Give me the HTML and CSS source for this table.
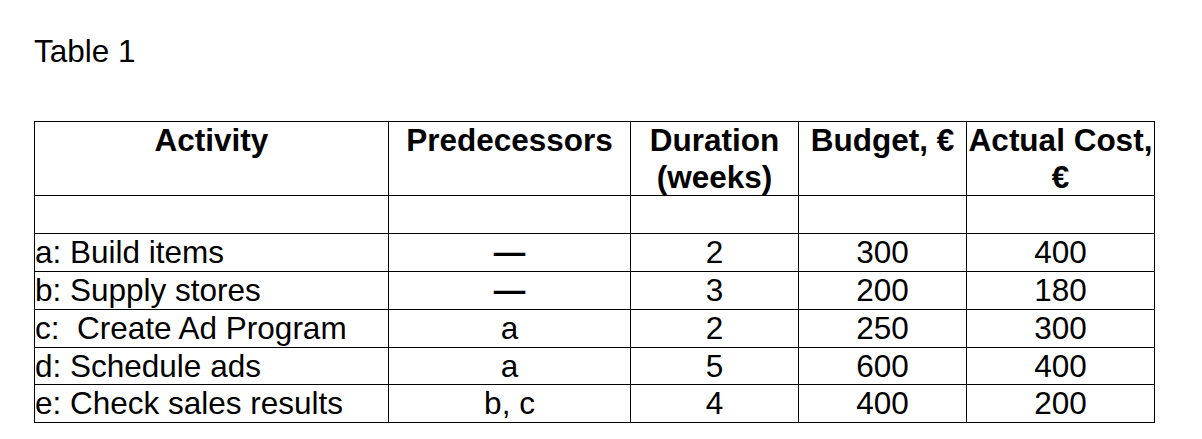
FILE: index.html
```html
<!DOCTYPE html>
<html lang="en">
<head>
<meta charset="utf-8">
<title>Table 1</title>
<link rel="stylesheet" href="styles.css">
</head>
<body>
<main class="page">
  <p class="caption">Table 1</p>
  <table class="data">
    <colgroup>
      <col class="c-activity">
      <col class="c-pred">
      <col class="c-dur">
      <col class="c-budget">
      <col class="c-actual">
    </colgroup>
    <thead>
      <tr>
        <th>Activity</th>
        <th>Predecessors</th>
        <th>Duration (weeks)</th>
        <th>Budget, €</th>
        <th>Actual Cost, €</th>
      </tr>
    </thead>
    <tbody>
      <tr class="blank"><td>&nbsp;</td><td></td><td></td><td></td><td></td></tr>
      <tr><td class="name">a: Build items</td><td class="none">—</td><td>2</td><td>300</td><td>400</td></tr>
      <tr><td class="name">b: Supply stores</td><td class="none">—</td><td>3</td><td>200</td><td>180</td></tr>
      <tr><td class="name">c:&nbsp; Create Ad Program</td><td>a</td><td>2</td><td>250</td><td>300</td></tr>
      <tr><td class="name">d: Schedule ads</td><td>a</td><td>5</td><td>600</td><td>400</td></tr>
      <tr><td class="name">e: Check sales results</td><td>b, c</td><td>4</td><td>400</td><td>200</td></tr>
    </tbody>
  </table>
</main>
</body>
</html>
```

FILE: styles.css
```css
html, body {
  margin: 0;
  padding: 0;
  background: #ffffff;
}

.page {
  padding: 33px 0 0 34px;
  font-family: "Liberation Sans", Arial, sans-serif;
  font-size: 31.5px;
  line-height: 36.8px;
  color: #000000;
}

.caption {
  margin: 0 0 51px 0;
}

.data {
  border-collapse: collapse;
  table-layout: fixed;
  width: 1120px;
}

.c-activity { width: 354px; }
.c-pred { width: 242px; }
.c-dur { width: 168px; }
.c-budget { width: 168px; }
.c-actual { width: 188px; }

.data th,
.data td {
  border: 1px solid #000000;
  padding: 0;
  text-align: center;
  vertical-align: top;
}

.data th {
  font-weight: bold;
  height: 73px;
}

.data td.name {
  text-align: left;
}

.data td.none {
  font-weight: bold;
}
```
